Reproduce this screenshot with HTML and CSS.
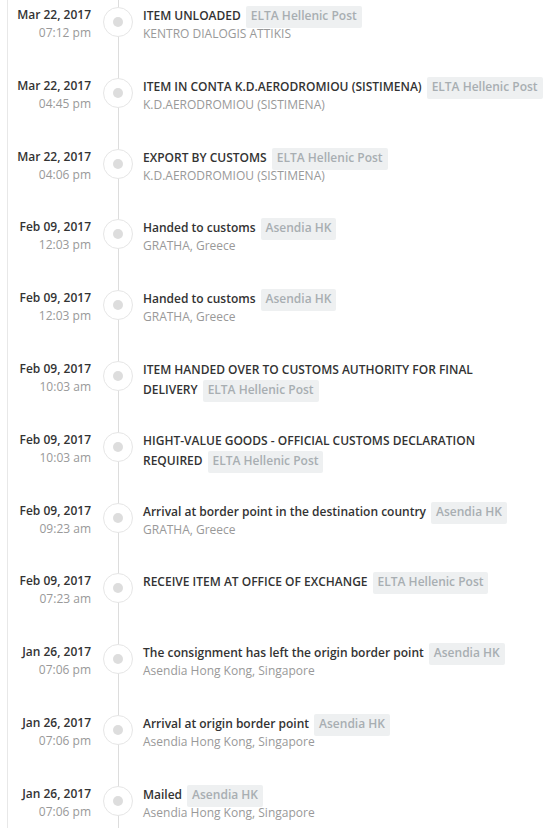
FILE: index.html
```html
<!DOCTYPE html>
<html>
<head>
<meta charset="utf-8">
<link rel="stylesheet" href="styles.css">
</head>
<body>
<div class="timeline">
  <div class="item">
    <div class="when"><div class="date">Mar 22, 2017</div><div class="time">07:12 pm</div></div>
    <div class="marker"><span class="dot"></span></div>
    <div class="what"><div class="title">ITEM UNLOADED<span class="badge">ELTA Hellenic Post</span></div><div class="loc">KENTRO DIALOGIS ATTIKIS</div></div>
  </div>
  <div class="item">
    <div class="when"><div class="date">Mar 22, 2017</div><div class="time">04:45 pm</div></div>
    <div class="marker"><span class="dot"></span></div>
    <div class="what"><div class="title">ITEM IN CONTA K.D.AERODROMIOU (SISTIMENA)<span class="badge">ELTA Hellenic Post</span></div><div class="loc">K.D.AERODROMIOU (SISTIMENA)</div></div>
  </div>
  <div class="item">
    <div class="when"><div class="date">Mar 22, 2017</div><div class="time">04:06 pm</div></div>
    <div class="marker"><span class="dot"></span></div>
    <div class="what"><div class="title">EXPORT BY CUSTOMS<span class="badge">ELTA Hellenic Post</span></div><div class="loc">K.D.AERODROMIOU (SISTIMENA)</div></div>
  </div>
  <div class="item">
    <div class="when"><div class="date">Feb 09, 2017</div><div class="time">12:03 pm</div></div>
    <div class="marker"><span class="dot"></span></div>
    <div class="what"><div class="title">Handed to customs<span class="badge">Asendia HK</span></div><div class="loc">GRATHA, Greece</div></div>
  </div>
  <div class="item">
    <div class="when"><div class="date">Feb 09, 2017</div><div class="time">12:03 pm</div></div>
    <div class="marker"><span class="dot"></span></div>
    <div class="what"><div class="title">Handed to customs<span class="badge">Asendia HK</span></div><div class="loc">GRATHA, Greece</div></div>
  </div>
  <div class="item">
    <div class="when"><div class="date">Feb 09, 2017</div><div class="time">10:03 am</div></div>
    <div class="marker"><span class="dot"></span></div>
    <div class="what"><div class="title">ITEM HANDED OVER TO CUSTOMS AUTHORITY FOR FINAL DELIVERY<span class="badge">ELTA Hellenic Post</span></div></div>
  </div>
  <div class="item">
    <div class="when"><div class="date">Feb 09, 2017</div><div class="time">10:03 am</div></div>
    <div class="marker"><span class="dot"></span></div>
    <div class="what"><div class="title">HIGHT-VALUE GOODS - OFFICIAL CUSTOMS DECLARATION REQUIRED<span class="badge">ELTA Hellenic Post</span></div></div>
  </div>
  <div class="item">
    <div class="when"><div class="date">Feb 09, 2017</div><div class="time">09:23 am</div></div>
    <div class="marker"><span class="dot"></span></div>
    <div class="what"><div class="title">Arrival at border point in the destination country<span class="badge">Asendia HK</span></div><div class="loc">GRATHA, Greece</div></div>
  </div>
  <div class="item">
    <div class="when"><div class="date">Feb 09, 2017</div><div class="time">07:23 am</div></div>
    <div class="marker"><span class="dot"></span></div>
    <div class="what"><div class="title">RECEIVE ITEM AT OFFICE OF EXCHANGE<span class="badge">ELTA Hellenic Post</span></div></div>
  </div>
  <div class="item">
    <div class="when"><div class="date">Jan 26, 2017</div><div class="time">07:06 pm</div></div>
    <div class="marker"><span class="dot"></span></div>
    <div class="what"><div class="title">The consignment has left the origin border point<span class="badge">Asendia HK</span></div><div class="loc">Asendia Hong Kong, Singapore</div></div>
  </div>
  <div class="item">
    <div class="when"><div class="date">Jan 26, 2017</div><div class="time">07:06 pm</div></div>
    <div class="marker"><span class="dot"></span></div>
    <div class="what"><div class="title">Arrival at origin border point<span class="badge">Asendia HK</span></div><div class="loc">Asendia Hong Kong, Singapore</div></div>
  </div>
  <div class="item">
    <div class="when"><div class="date">Jan 26, 2017</div><div class="time">07:06 pm</div></div>
    <div class="marker"><span class="dot"></span></div>
    <div class="what"><div class="title">Mailed<span class="badge">Asendia HK</span></div><div class="loc">Asendia Hong Kong, Singapore</div></div>
  </div>
</div>
</body>
</html>
```
FILE: styles.css
```css
html, body {
  margin: 0;
  padding: 0;
  background: #fff;
}
body {
  font-family: "Open Sans", "Liberation Sans", sans-serif;
  font-size: 12px;
  color: #333;
}
.timeline {
  margin-left: 7px;
  border-left: 1px solid #e8e8e8;
  min-height: 828px;
}
.item {
  display: grid;
  grid-template-columns: 83px 52px 1fr;
  height: 70.8px;
  box-sizing: border-box;
}
.when {
  text-align: right;
  padding-top: 6px;
}
.date {
  font-weight: 600;
  line-height: 18px;
  color: #333;
}
.time {
  line-height: 18px;
  color: #999;
}
.marker {
  background: linear-gradient(#ddd, #ddd) no-repeat;
  background-size: 1px 100%;
  background-position: 27px 0;
  display: flex;
  justify-content: flex-start;
  padding-top: 7px;
}
.dot {
  box-sizing: border-box;
  width: 30px;
  height: 30px;
  margin-left: 12px;
  border: 1px solid #e6e6e6;
  border-radius: 50%;
  background: #fff;
  display: flex;
  align-items: center;
  justify-content: center;
}
.dot::after {
  content: "";
  width: 10px;
  height: 10px;
  border-radius: 50%;
  background: #ddd;
}
.what {
  padding-top: 6px;
}
.title {
  font-weight: 600;
  line-height: 20px;
  color: #333;
}
.badge {
  font-weight: 600;
  white-space: nowrap;
  padding: 1px 5px 4px;
  margin-left: 5px;
  background: #eef0f1;
  color: #a8aeb2;
  border-radius: 2px;
}
.loc {
  line-height: 16px;
  color: #999;
}
```
